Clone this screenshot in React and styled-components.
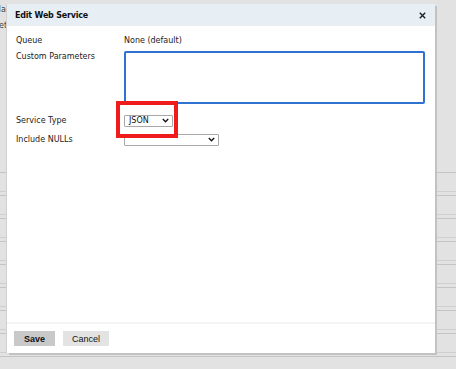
import React from "react";
import styled, { createGlobalStyle } from "styled-components";

const Global = createGlobalStyle`
  html, body { margin: 0; padding: 0; }
  body { background: #e2e2e2; font-family: "DejaVu Sans", Verdana, sans-serif; }
`;

const Page = styled.div`
  position: relative;
  width: 456px;
  height: 369px;
  overflow: hidden;
  background: #e2e2e2;
`;

const BackText = styled.div`
  font-family: "DejaVu Sans", sans-serif;
  font-size: 8px;
  color: #444;
  padding: 2px 0 0 0;
  line-height: 16px;
  margin-left: -6px;
`;

const BackTable = styled.div`
  display: flex;
  flex-direction: column;
  margin-top: 138px;
`;

const BackRow = styled.div`
  height: 18px;
  border-top: 1px solid #c4c4c4;
  border-bottom: 1px solid #cfcfcf;
  margin-bottom: 3px;
`;

const Dialog = styled.div`
  position: absolute;
  left: 7px;
  top: 4px;
  width: 428px;
  height: 349px;
  background: #fff;
  display: flex;
  flex-direction: column;
  box-shadow: 2px 2px 0 #c2c2c2, -1px 0 0 #d0d0d0;
`;

const Header = styled.div`
  height: 22px;
  background: #e7eff5;
  display: flex;
  align-items: center;
  justify-content: space-between;
  padding: 0 9px 0 8px;
`;

const Title = styled.div`
  font-family: "DejaVu Sans", sans-serif;
  font-weight: bold;
  font-size: 8px;
  letter-spacing: -0.2px;
  color: #111;
`;

const Close = styled.div`
  width: 8px;
  height: 8px;
  display: flex;
  align-items: center;
  justify-content: center;
`;

const Body = styled.div`
  flex: 1;
  padding: 7px 10px 0 9px;
  display: grid;
  grid-template-columns: 108px 1fr;
  align-content: start;
  position: relative;
  font-size: 8px;
  color: #222;
`;

const Label = styled.div`
  font-family: "DejaVu Sans", sans-serif;
  font-size: 8px;
  line-height: ${(p) => p.$lh || 16}px;
  height: ${(p) => p.$h || 16}px;
`;

const Value = styled.div`
  font-size: 8px;
  line-height: 16px;
  height: 16px;
`;

const Cell = styled.div`
  height: ${(p) => p.$h}px;
  display: flex;
  align-items: ${(p) => p.$align || "center"};
`;

const TextArea = styled.div`
  margin-top: 2px;
  width: 301px;
  height: 53px;
  box-sizing: border-box;
  border: 2px solid #2f72cf;
  border-radius: 2px;
  background: #fff;
`;

const Select = styled.div`
  width: ${(p) => p.$w}px;
  height: 12px;
  box-sizing: border-box;
  border: 1px solid #a8a8a8;
  border-radius: 1px;
  background: #fff;
  display: flex;
  align-items: center;
  justify-content: space-between;
  padding: 0 3px 0 4px;
  font-size: 8px;
  line-height: 10px;
  color: #111;
`;

const Highlight = styled.div`
  position: absolute;
  left: 109px;
  top: 75px;
  width: 62px;
  height: 37px;
  box-sizing: border-box;
  border: 4px solid #f01b1b;
`;

const Footer = styled.div`
  height: 29px;
  border-top: 2px solid #f4f4f4;
  display: flex;
  align-items: center;
  gap: 8px;
  padding: 0 7px;
`;

const Button = styled.div`
  height: 15px;
  padding: 0 ${(p) => p.$px}px;
  display: flex;
  align-items: center;
  background: ${(p) => (p.$primary ? "#c9c9c9" : "#e3e3e3")};
  font-family: "Liberation Sans", Arial, sans-serif;
  font-weight: ${(p) => (p.$primary ? "bold" : "normal")};
  font-size: 9px;
  color: #111;
`;

const Chevron = () => (
  <svg width="7" height="5" viewBox="0 0 7 5">
    <path d="M0.8 1 L3.5 3.8 L6.2 1" fill="none" stroke="#111" strokeWidth="1.3" />
  </svg>
);

export default function App() {
  return (
    <>
      <Global />
      <Page>
        <BackText>
          <div>Mag</div>
          <div>Setti</div>
        </BackText>
        <BackTable>
          {Array.from({ length: 9 }).map((_, i) => (
            <BackRow key={i} />
          ))}
        </BackTable>
        <Dialog>
          <Header>
            <Title>Edit Web Service</Title>
            <Close>
              <svg width="7" height="7" viewBox="0 0 7 7">
                <path d="M0.8 0.8 L6.2 6.2 M6.2 0.8 L0.8 6.2" stroke="#222" strokeWidth="1.4" />
              </svg>
            </Close>
          </Header>
          <Body>
            <Label>Queue</Label>
            <Value>None (default)</Value>
            <Label $h={62} $lh={16}>Custom Parameters</Label>
            <Cell $h={62} $align="flex-start">
              <TextArea />
            </Cell>
            <Label $h={19} $lh={19}>Service Type</Label>
            <Cell $h={19}>
              <Select $w={49}>
                <span>JSON</span>
                <Chevron />
              </Select>
            </Cell>
            <Label $h={19} $lh={19}>Include NULLs</Label>
            <Cell $h={19}>
              <Select $w={95}>
                <span />
                <Chevron />
              </Select>
            </Cell>
            <Highlight />
          </Body>
          <Footer>
            <Button $primary $px={10}>Save</Button>
            <Button $px={9}>Cancel</Button>
          </Footer>
        </Dialog>
      </Page>
    </>
  );
}
